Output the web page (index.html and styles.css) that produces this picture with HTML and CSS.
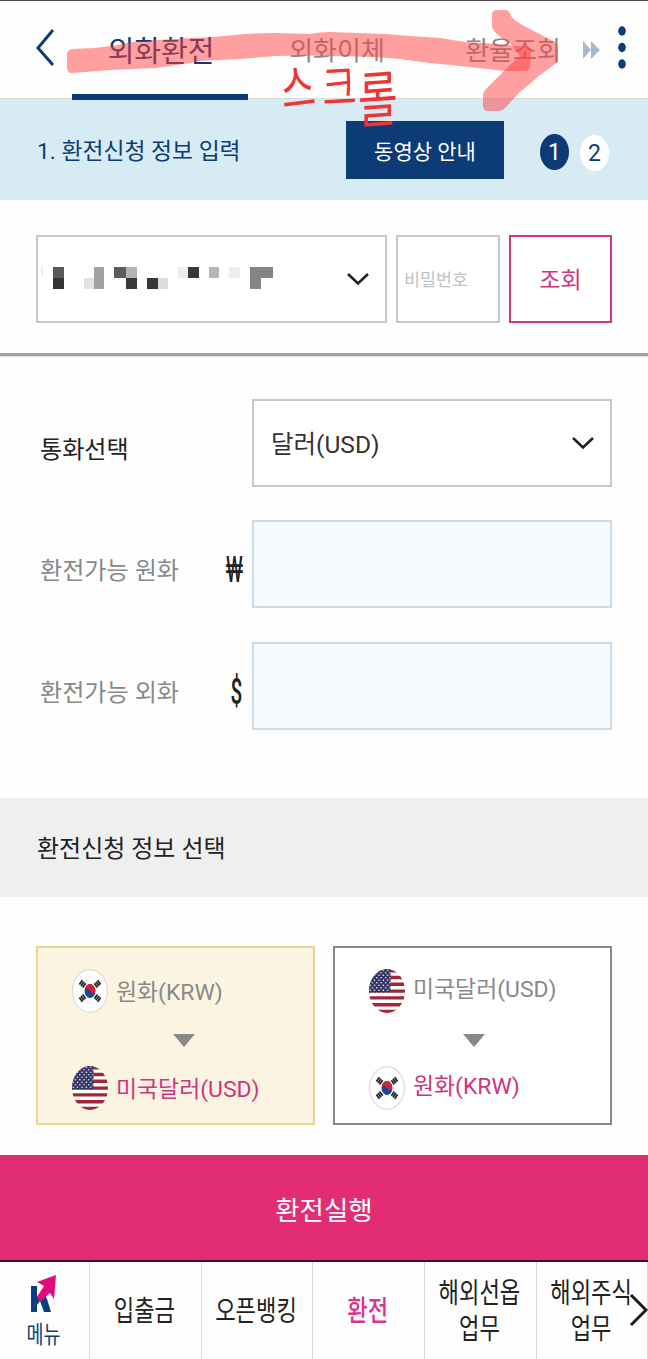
FILE: index.html
```html
<!DOCTYPE html>
<html lang="ko">
<head>
    <meta charset="UTF-8">
    <meta name="viewport" content="width=device-width, initial-scale=1.0">
    <title>외화환전</title>
    <link rel="stylesheet" href="styles.css">
</head>
<body>
    <!-- shared flag icons -->
    <svg class="defs" width="0" height="0">
        <defs>
            <pattern id="stars" width="4.4" height="5" patternUnits="userSpaceOnUse">
                <circle cx="1.2" cy="1.3" r=".75" fill="#fff"/>
                <circle cx="3.4" cy="3.8" r=".75" fill="#fff"/>
            </pattern>
            <clipPath id="oval"><ellipse cx="18" cy="22" rx="18" ry="22"/></clipPath>
            <symbol id="flag-us" viewBox="0 0 36 44">
                <g clip-path="url(#oval)">
                    <rect width="36" height="44" fill="#fff"/>
                    <path d="M0 1.7h36M0 8.5h36M0 15.3h36M0 22.1h36M0 28.9h36M0 35.7h36M0 42.5h36" stroke="#a32638" stroke-width="3.4"/>
                    <rect width="21.5" height="23.4" fill="#343567"/>
                    <rect width="21.5" height="23.4" fill="url(#stars)"/>
                </g>
            </symbol>
            <symbol id="flag-kr" viewBox="0 0 36 44">
                <ellipse cx="18" cy="22" rx="17.4" ry="21.4" fill="#fff" stroke="#dcdcdc" stroke-width="1.2"/>
                <ellipse cx="18" cy="22" rx="5.4" ry="7" fill="#17479e"/>
                <path d="M12.6 22a5.4 7 0 0 1 10.8 0c0 2.8-3.6 3.6-5.4 0s-4.6-2.6-5.4 0z" fill="#d5232f"/>
                <g stroke="#222" stroke-width="1.8">
                    <path d="M7.4 15.4l3-4.2M9 17l3-4.2M10.6 18.5l3-4.2"/>
                    <path d="M28.6 15.4l-3-4.2M27 17l-3-4.2M25.4 18.5l-3-4.2"/>
                    <path d="M7.4 28.6l3 4.2M9 27l3 4.2M10.6 25.5l3 4.2"/>
                    <path d="M28.6 28.6l-3 4.2M27 27l-3 4.2M25.4 25.5l-3 4.2"/>
                </g>
            </symbol>
        </defs>
    </svg>

    <header class="top">
        <svg class="back" width="20" height="40" viewBox="0 0 20 40"><path d="M18 2L3 20l15 17" fill="none" stroke="#0c3b75" stroke-width="3"/></svg>
        <nav class="tabs">
            <a class="tab active" href="#">외화환전</a>
            <a class="tab" href="#">외화이체</a>
            <a class="tab" href="#">환율조회</a>
        </nav>
        <svg class="next" width="17" height="18" viewBox="0 0 17 18"><path d="M0 0l8 9-8 9zM8 0l9 9-9 9z" fill="#a9b9cd"/></svg>
        <svg class="more" width="8" height="44" viewBox="0 0 8 44"><g fill="#0c3b75"><ellipse cx="4" cy="5" rx="3.8" ry="4.7"/><ellipse cx="4" cy="21.5" rx="3.8" ry="4.7"/><ellipse cx="4" cy="38" rx="3.8" ry="4.7"/></g></svg>

        <!-- scroll hint drawn over the tabs -->
        <svg class="hint" width="648" height="140" viewBox="0 0 648 140">
            <g fill="#ff4040" fill-opacity=".5">
                <path d="M67 54Q67 50 72 49L95 48Q115 46 133 42Q180 38 215 37Q250 33 275 33L310 34Q320 32 330 32L385 34L410 36L440 38L465 42L500 44L526 47Q531 48 531 53L530 66Q530 71 524 71L505 71L460 66L430 63L400 59Q370 56 330 56Q300 55 275 56L240 59L200 61Q180 65 155 68L110 70L72 73Q67 73 67 68Z"/>
                <path d="M492 15Q492 10 497 10L506 10Q510 11 511 16Q513 20 526 27L553 41Q558 44 558 50L558 60Q558 62 555 64L540 75L520 92L504 109Q502 111 499 111L488 111Q483 111 483 105L483 95Q483 92 486 89L507 68L520 56L512 45Q502 39 496 33Q492 29 492 25Z"/>
            </g>
            <g class="hint-text">
                <text transform="translate(283 109) rotate(-7) scale(1.03 1.43)">스</text>
                <text transform="translate(323 106) rotate(-3) scale(1.03 1.36)">크</text>
                <text transform="translate(358 123) rotate(-4) skewX(-4) scale(1.2 1.7)">롤</text>
            </g>
        </svg>
    </header>

    <section class="step">
        <h2>1. 환전신청 정보 입력</h2>
        <button class="video">동영상 안내</button>
        <span class="num on">1</span>
        <span class="num">2</span>
    </section>

    <main>
        <section class="account">
            <div class="box select">
                <svg width="236" height="26" viewBox="0 0 236 26">
                    <path d="M1 0v10" stroke="#ddd"/>
                    <path d="M12 1h11v11H12z" fill="#595959"/><path d="M12 12h11v11H12z" fill="#343434"/>
                    <path d="M43 12h10v11H43z" fill="#e2e2e2"/><path d="M53 1h10v22H53z" fill="#a2a2a2"/>
                    <path d="M73 1h12v11H73z" fill="#5c5c5c"/><path d="M85 1h11v11H85z" fill="#b4b4b4"/>
                    <path d="M85 12h11v11H85zM106 12h11v11h-11zM147 1h11v11h-11z" fill="#383838"/>
                    <path d="M117 12h10v11h-10z" fill="#ddd"/><path d="M137 1h10v11h-10zM188 1h11v11h-11z" fill="#ededed"/>
                    <path d="M168 1h10v11h-10z" fill="#b6b6b6"/><path d="M209 1h23v11h-12v11h-11z" fill="#858585"/>
                </svg>
                <svg class="arrow" width="24" height="14" viewBox="0 0 24 14"><path d="M2 2l10 9.5L22 2" fill="none" stroke="#222" stroke-width="2.6"/></svg>
            </div>
            <div class="box password">비밀번호</div>
            <button class="box search">조회</button>
        </section>

        <section class="form">
            <div class="row">
                <label class="dark">통화선택</label>
                <div class="box select usd">달러(USD)
                    <svg class="arrow" width="24" height="14" viewBox="0 0 24 14"><path d="M2 2l10 9.5L22 2" fill="none" stroke="#222" stroke-width="2.6"/></svg>
                </div>
            </div>
            <div class="row">
                <label>환전가능 원화</label>
                <span class="sign won">₩</span>
                <div class="box amount"></div>
            </div>
            <div class="row last">
                <label>환전가능 외화</label>
                <span class="sign dollar">$</span>
                <div class="box amount"></div>
            </div>
        </section>

        <h3 class="title">환전신청 정보 선택</h3>

        <section class="cards">
            <div class="card selected">
                <div class="line"><svg class="flag"><use href="#flag-kr"/></svg><span>원화(KRW)</span></div>
                <i class="down"></i>
                <div class="line pink"><svg class="flag"><use href="#flag-us"/></svg><span>미국달러(USD)</span></div>
            </div>
            <div class="card">
                <div class="line high"><svg class="flag"><use href="#flag-us"/></svg><span>미국달러(USD)</span></div>
                <i class="down left"></i>
                <div class="line pink high"><svg class="flag"><use href="#flag-kr"/></svg><span>원화(KRW)</span></div>
            </div>
        </section>
        <button class="submit">환전실행</button>
    </main>

    <footer class="bottom">
        <a class="item menu" href="#">
            <svg width="28" height="38" viewBox="0 0 28 38">
                <path d="M1 11h6v11l5-7 5 9 4 13h-7l-4-11-3 4v7H1z" fill="#0c3b80"/>
                <path d="M7 7L26 0l-2 24-4-6-10 9-3-5 7-11z" fill="#e6097e"/>
            </svg>
            <span>메뉴</span>
        </a>
        <a class="item" href="#"><span>입출금</span></a>
        <a class="item" href="#"><span>오픈뱅킹</span></a>
        <a class="item current" href="#"><span>환전</span></a>
        <a class="item" href="#"><span>해외선옵<br>업무</span></a>
        <a class="item" href="#"><span>해외주식<br>업무</span></a>
        <svg class="scroll" width="19" height="34" viewBox="0 0 19 34"><path d="M2 2l15 15L2 32" fill="none" stroke="#1c1c1c" stroke-width="3"/></svg>
    </footer>
</body>
</html>
```
FILE: styles.css
```css
* {
    box-sizing: border-box;
}

body {
    margin: 0;
    width: 648px;
    height: 1359px;
    overflow: hidden;
    background-color: #fefefe;
    color: #222;
    font-family: Roboto, "Noto Sans CJK KR", sans-serif;
}

a {
    color: inherit;
    text-decoration: none;
}

button {
    font-family: inherit;
    padding: 0;
    border: 0;
    border-radius: 0;
}

.defs {
    position: absolute;
}

.top {
    position: relative;
    display: flex;
    height: 99px;
    border-top: 1px solid #4a4a4c;
    border-bottom: 1px solid #dadada;
}

.back {
    margin: 27px 0 0 35px;
}

.tabs {
    display: flex;
    margin-left: 17px;
    width: 511px;
}

.tab {
    width: 176px;
    height: 99px;
    padding-left: 2px;
    text-align: center;
    font-size: 26px;
    line-height: 101px;
    color: #8a8a8a;
    flex-shrink: 0;
}

.tab.active {
    font-size: 29px;
    line-height: 102px;
    color: #0c3b75;
    border-bottom: 6px solid #0c3b75;
}

.next {
    margin-top: 40px;
}

.more {
    margin: 25px 0 0 18px;
}

.hint {
    position: absolute;
    left: 0;
    top: -1px;
    z-index: 2;
}

.hint-text {
    font-family: "Noto Sans CJK KR", sans-serif;
    font-size: 36px;
    font-weight: 400;
    fill: #ee3434;
}

.step {
    display: flex;
    height: 101px;
    padding: 22px 0 0 37px;
    background-color: #d6ebf4;
    border-bottom: 1px solid #e2e9ec;
    color: #0c3b75;
}

.step h2 {
    margin: 0;
    width: 309px;
    font-size: 22.8px;
    font-weight: 400;
    line-height: 61px;
    white-space: nowrap;
}

.video {
    width: 158px;
    height: 58px;
    background-color: #0c3b75;
    color: #fff;
    font-size: 21px;
}

.num {
    width: 29px;
    height: 36px;
    margin: 13px 0 0 36px;
    border-radius: 50%;
    background-color: #fff;
    font-size: 23px;
    line-height: 37px;
    text-align: center;
}

.num.on {
    background-color: #0c3b75;
    color: #fff;
}

.num + .num {
    margin: 14px 0 0 11px;
}

.box {
    display: flex;
    align-items: center;
    height: 88px;
    border: 2px solid #c8c8c8;
    background-color: #fff;
}

.account {
    display: flex;
    height: 156px;
    padding: 35px 36px 0;
    border-bottom: 3px solid #a0a0a0;
    box-shadow: 0 1px 0 #dedede;
}

.account .select {
    width: 351px;
    padding-left: 3px;
}

.arrow {
    margin-left: auto;
    margin-right: 15px;
}

.password {
    width: 104px;
    margin-left: 9px;
    padding: 0 0 2px 6px;
    color: #c2c2c2;
    font-size: 17.4px;
}

.search {
    justify-content: center;
    width: 103px;
    margin-left: 9px;
    padding-bottom: 2px;
    border-color: #c93a80;
    color: #cf3480;
    font-size: 23px;
}

.form {
    display: flex;
    flex-direction: column;
    gap: 33px;
    height: 442px;
    padding: 43px 36px 0 40px;
}

.row {
    display: flex;
    align-items: center;
}

.row.last {
    margin-top: 1px;
}

.row label {
    width: 180px;
    padding-top: 8px;
    color: #898989;
    font-size: 24.1px;
}

.row label.dark {
    width: 212px;
    color: #222;
}

.usd {
    width: 360px;
    padding: 0 0 1px 17px;
    color: #333;
    font-size: 24.5px;
}

.sign {
    width: 32px;
    padding-right: 10px;
    text-align: right;
    font-size: 26px;
    line-height: 34px;
}

.won {
    margin-top: 10px;
    padding-right: 10px;
    transform: scale(.9, 1.4);
    transform-origin: right;
}

.dollar {
    margin-top: 10px;
    padding-right: 12px;
    transform: scale(.8, 1.4);
    transform-origin: right;
    font-weight: 500;
}

.amount {
    width: 360px;
    background-color: #f5fbff;
    border-color: #cddbe7;
}

.title {
    margin: 0;
    height: 99px;
    padding-left: 37px;
    background-color: #efefef;
    font-size: 24px;
    font-weight: 400;
    line-height: 102px;
}

.cards {
    display: flex;
    gap: 18px;
    height: 258px;
    padding: 49px 36px 0;
}

.card {
    display: flex;
    flex-direction: column;
    width: 279px;
    height: 179px;
    padding: 20px 0 0 34px;
    border: 2px solid #898989;
    background-color: #fff;
}

.card.selected {
    background-color: #faf4e1;
    border-color: #edd390;
}

.line {
    display: flex;
    align-items: center;
    height: 45px;
    color: #898989;
    font-size: 22.9px;
}

.line span {
    margin: -2px 0 0 8px;
}

.high span {
    margin-top: -8px;
}

.flag {
    width: 36px;
    height: 44px;
}

.pink {
    color: #cf3480;
}

.down {
    width: 22px;
    height: 13px;
    margin: 21px 0 18px 101px;
    background-color: #888;
    clip-path: polygon(0 0, 100% 0, 50% 100%);
}

.down.left {
    margin-left: 94px;
}

.submit {
    display: block;
    width: 100%;
    height: 107px;
    background-color: #e22d74;
    border-bottom: 2px solid #3a1525;
    padding-top: 2px;
    color: #fff;
    font-size: 26.5px;
}

.bottom {
    position: relative;
    display: flex;
    height: 97px;
}

.item {
    display: flex;
    flex-direction: column;
    align-items: center;
    justify-content: center;
    width: 111.7px;
    padding-right: 2px;
    flex-shrink: 0;
    border-right: 1px solid #dcdcdc;
    font-size: 22.2px;
    line-height: 28px;
    text-align: center;
}

.item span {
    transform: scaleY(1.27);
}

.menu {
    width: 90px;
    justify-content: flex-start;
    padding: 13px 2px 0 0;
    color: #0c3b75;
    font-size: 18.5px;
}

.menu span {
    margin-top: 8px;
}

.current {
    color: #d9338a;
    font-weight: 500;
}

.scroll {
    position: absolute;
    right: 0;
    top: 31px;
}
```
